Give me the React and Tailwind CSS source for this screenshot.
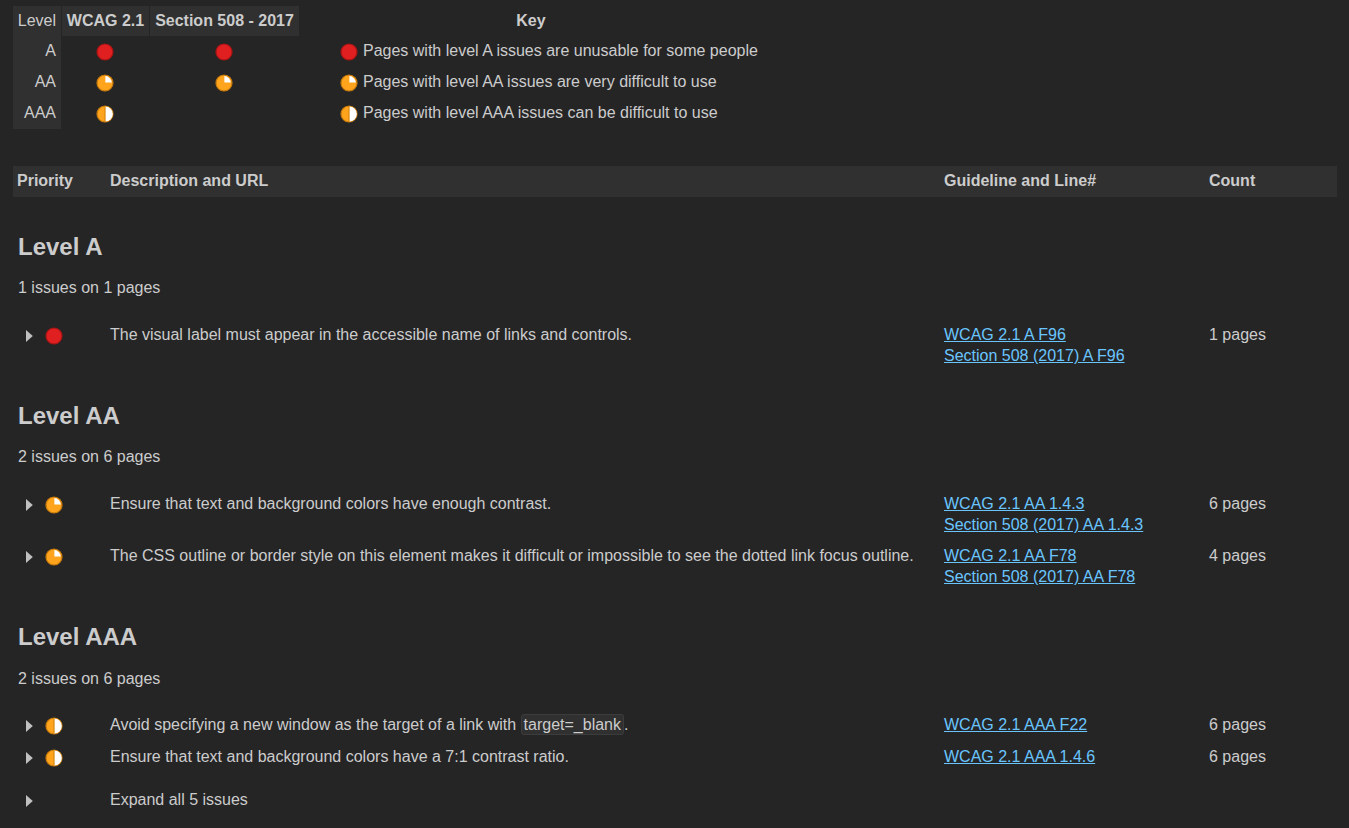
function Dot({ level, className = "" }) {
  // red = A, quarter pie = AA, half pie = AAA
  if (level === "A") {
    return (
      <svg width="18" height="18" viewBox="0 0 18 18" className={className}>
        <circle cx="9" cy="9" r="8" fill="#e02020" stroke="#a81414" strokeWidth="1.2" />
      </svg>
    );
  }
  return (
    <svg width="18" height="18" viewBox="0 0 18 18" className={className}>
      <circle cx="9" cy="9" r="8" fill="#ffa41c" stroke="#c77a0c" strokeWidth="1.2" />
      {level === "AA" ? (
        <path d="M9.4 2.1A7 7 0 0 1 15.9 8.6H9.4Z" fill="#fff" />
      ) : (
        <>
          <path d="M9.4 1.6A7.4 7.4 0 0 1 9.4 16.4Z" fill="#fff" />
          <path d="M9 1.5V16.5" stroke="#c77a0c" strokeWidth="0.8" />
        </>
      )}
    </svg>
  );
}

function Caret() {
  return (
    <svg width="8" height="12" viewBox="0 0 8 12" className="ml-[9px]">
      <path d="M1 0L7.8 6L1 12Z" fill="#c0c0c0" />
    </svg>
  );
}

function IssueRow({ level, links, count, children, className = "" }) {
  return (
    <div className={`grid grid-cols-[93px_834px_265px_1fr] ${className}`}>
      <div className="flex items-center h-[21px] pl-[3px] pt-[2px] gap-[6px]">
        <Caret />
        {level && <Dot level={level} className="ml-[6px]" />}
      </div>
      <div className="pl-[4px] leading-[21px]">{children}</div>
      <div className="pl-[4px] leading-[21px]">
        {links &&
          links.map((l) => (
            <a key={l} href="#" className="block text-[#6ac5ff] underline">
              {l}
            </a>
          ))}
      </div>
      <div className="pl-[4px] leading-[21px]">{count}</div>
    </div>
  );
}

function SectionHead({ title, summary, className = "", gap = "mt-[16px]" }) {
  return (
    <div className={`pl-[5px] ${className}`}>
      <h2 className="text-2xl font-bold leading-[28px]">{title}</h2>
      <p className={`${gap} leading-[21px]`}>{summary}</p>
    </div>
  );
}

const keyRows = [
  { level: "A", wcag: true, s508: true, text: "Pages with level A issues are unusable for some people" },
  { level: "AA", wcag: true, s508: true, text: "Pages with level AA issues are very difficult to use" },
  { level: "AAA", wcag: true, s508: false, text: "Pages with level AAA issues can be difficult to use" },
];

export default function App() {
  return (
    <div className="min-h-[828px] bg-[#252526] text-[#cccccc] text-base font-['Liberation_Sans',Arial,sans-serif] overflow-hidden pt-[6px] px-[13px] pr-[12px]">
      {/* key table */}
      <div className="grid grid-cols-[48px_1px_87px_1px_149px_4px_456px]">
        <div className="bg-[#303030] h-[30px] pr-[5px] text-right leading-[30px]">Level</div>
        <div />
        <div className="bg-[#303030] h-[30px] text-center font-bold leading-[30px]">WCAG 2.1</div>
        <div />
        <div className="bg-[#303030] h-[30px] text-center font-bold leading-[30px]">Section 508 - 2017</div>
        <div />
        <div className="h-[30px] text-center font-bold leading-[30px]">Key</div>
        {keyRows.map((r) => (
          <div key={r.level} className="contents">
            <div className="bg-[#303030] h-[31px] pr-[5px] text-right leading-[29px]">{r.level}</div>
            <div />
            <div className="h-[31px] flex items-center justify-center pr-[2px]">
              {r.wcag && <Dot level={r.level} />}
            </div>
            <div />
            <div className="h-[31px] flex items-center justify-center pr-[2px]">
              {r.s508 && <Dot level={r.level} />}
            </div>
            <div />
            <div className="h-[31px] flex items-center pl-[37px] gap-[5px]">
              <Dot level={r.level} />
              <span className="leading-[29px] -mt-[2px]">{r.text}</span>
            </div>
          </div>
        ))}
      </div>

      {/* column header */}
      <div className="mt-[37px] grid grid-cols-[93px_834px_265px_1fr] bg-[#303030] h-[31px] font-bold leading-[29px]">
        <div className="pl-[4px]">Priority</div>
        <div className="pl-[4px]">Description and URL</div>
        <div className="pl-[4px]">Guideline and Line#</div>
        <div className="pl-[4px]">Count</div>
      </div>

      <SectionHead className="mt-[36px]" title="Level A" summary="1 issues on 1 pages" />
      <IssueRow
        className="mt-[26px]"
        level="A"
        links={["WCAG 2.1 A F96", "Section 508 (2017) A F96"]}
        count="1 pages"
      >
        The visual label must appear in the accessible name of links and controls.
      </IssueRow>

      <SectionHead className="mt-[36px]" title="Level AA" summary="2 issues on 6 pages" />
      <IssueRow
        className="mt-[26px]"
        level="AA"
        links={["WCAG 2.1 AA 1.4.3", "Section 508 (2017) AA 1.4.3"]}
        count="6 pages"
      >
        Ensure that text and background colors have enough contrast.
      </IssueRow>
      <IssueRow
        className="mt-[10px]"
        level="AA"
        links={["WCAG 2.1 AA F78", "Section 508 (2017) AA F78"]}
        count="4 pages"
      >
        The CSS outline or border style on this element makes it difficult or impossible to see the dotted link focus outline.
      </IssueRow>

      <SectionHead className="mt-[36px]" gap="mt-[17px]" title="Level AAA" summary="2 issues on 6 pages" />
      <IssueRow className="mt-[25px]" level="AAA" links={["WCAG 2.1 AAA F22"]} count="6 pages">
        Avoid specifying a new window as the target of a link with{" "}
        <code className="font-['Liberation_Sans',Arial,sans-serif] bg-[#303030] border border-[#3c3c3c] rounded-[3px] px-[2px] py-[1px]">
          target=_blank
        </code>
        .
      </IssueRow>
      <IssueRow className="mt-[11px]" level="AAA" links={["WCAG 2.1 AAA 1.4.6"]} count="6 pages">
        Ensure that text and background colors have a 7:1 contrast ratio.
      </IssueRow>
      <IssueRow className="mt-[22px]">Expand all 5 issues</IssueRow>
    </div>
  );
}
